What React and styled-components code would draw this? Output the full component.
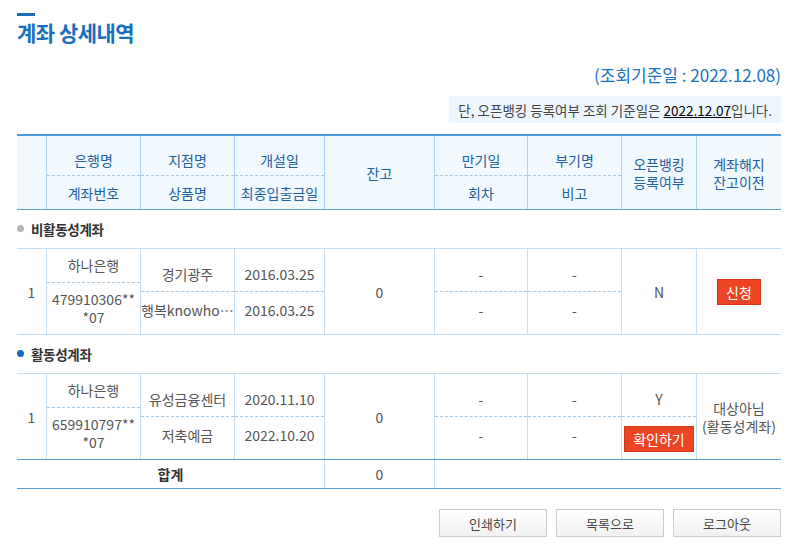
import React from "react";
import styled, { createGlobalStyle } from "styled-components";

const GlobalStyle = createGlobalStyle`
  body {
    margin: 0;
    background: #fff;
    font-family: "Noto Sans CJK KR", "Noto Sans", sans-serif;
    font-size: 14px;
    color: #555;
  }
`;

const COLS = "29px 94px 94px 90px 110px 93px 94px 75px 85px";

const Page = styled.div`
  width: 764px;
  padding: 13px 19px 0 17px;
`;

const TitleBar = styled.div`
  width: 18px;
  height: 3px;
  background: #1a6ebd;
`;

const Title = styled.h1`
  margin: 3px 0 0;
  font-size: 21px;
  line-height: 26px;
  font-weight: 700;
  color: #1a6ebd;
  letter-spacing: -0.5px;
`;

const BaseDate = styled.div`
  margin-top: 19px;
  text-align: right;
  font-size: 17px;
  line-height: 22px;
  color: #1a72c0;
`;

const NoticeRow = styled.div`
  display: flex;
  justify-content: flex-end;
  margin-top: 10px;
`;

const Notice = styled.div`
  height: 27px;
  padding: 0 9px;
  display: flex;
  align-items: center;
  background: #eef6fd;
  color: #444;
  font-size: 13.5px;

  u {
    color: #000;
  }
`;

const Table = styled.div`
  margin-top: 11px;
`;

const Header = styled.div`
  display: grid;
  grid-template-columns: ${COLS};
  grid-template-rows: 73px;
  background: #f1f8fe;
  border-top: 2px solid #4c9ad6;
  border-bottom: 1px solid #5a9fd6;
  color: #22609e;
`;

const Row = styled.div`
  display: grid;
  grid-template-columns: ${COLS};
  border-top: 1px solid #c6def2;
  border-bottom: 1px solid ${(p) => (p.$last ? "#5a9fd6" : "#c6def2")};
`;

const Cell = styled.div`
  display: flex;
  flex-direction: column;
  justify-content: center;
  align-items: stretch;
  text-align: center;
  line-height: 18px;
  min-width: 0;
  border-left: 1px solid ${(p) => (p.$head ? "#a9d2f4" : "#c6def2")};

  &:first-child {
    border-left: none;
  }
`;

const Half = styled.div`
  flex: 1;
  display: flex;
  flex-direction: column;
  justify-content: ${(p) => (p.$top ? "flex-end" : "flex-start")};
  align-items: center;
  padding: ${(p) => (p.$top ? "0 0 8px" : "9px 0 0")};
  min-width: 0;
  overflow: hidden;

  & + & {
    border-top: 1px dashed #a9c9e2;
  }
`;

const HeadHalf = styled.div`
  flex: 1;
  display: flex;
  align-items: ${(p) => (p.$top ? "flex-end" : "center")};
  justify-content: center;
  padding-bottom: ${(p) => (p.$top ? "6px" : "0")};

  & + & {
    border-top: 1px dashed #a9c9e2;
  }
`;

const BankPart = styled.div`
  padding: ${(p) => (p.$first ? "7px 3px 8px" : "7px 3px 8px")};
  word-break: break-all;

  & + & {
    border-top: 1px dashed #a9c9e2;
  }
`;

const Ellipsis = styled.span`
  display: block;
  width: 100%;
  white-space: nowrap;
  overflow: hidden;
  text-overflow: ellipsis;
  text-align: center;
`;

const SectionLabel = styled.div`
  height: 38px;
  display: flex;
  align-items: center;
  gap: 7px;
  font-size: 13.5px;
  font-weight: 700;
  color: #333;
  letter-spacing: -0.3px;
  padding-bottom: 1px;
  box-sizing: border-box;

  &::before {
    content: "";
    width: 7px;
    height: 7px;
    border-radius: 50%;
    background: ${(p) => (p.$active ? "#0f6cbd" : "#b5b5b5")};
  }
`;

const RedButton = styled.button`
  font-family: inherit;
  font-size: 14px;
  line-height: 18px;
  color: #fff;
  background: #ec4524;
  border: 1px solid #d33a1a;
  padding: 3px 8px;
  cursor: pointer;
`;

const TotalRow = styled.div`
  display: grid;
  grid-template-columns: 307px 110px 347px;
  height: 28px;
  border-bottom: 1px solid #5a9fd6;
`;

const TotalCell = styled.div`
  display: flex;
  align-items: center;
  justify-content: center;
  border-left: 1px solid #c6def2;
  font-weight: ${(p) => (p.$bold ? 700 : 400)};
  color: ${(p) => (p.$bold ? "#333" : "#555")};

  &:first-child {
    border-left: none;
  }
`;

const Buttons = styled.div`
  display: flex;
  justify-content: flex-end;
  gap: 9px;
  margin-top: 20px;
`;

const GrayButton = styled.button`
  width: 108px;
  height: 28px;
  font-family: inherit;
  font-size: 13px;
  color: #444;
  background: linear-gradient(#ffffff, #f1f1f1);
  border: 1px solid #cccccc;
  cursor: pointer;
`;

const accounts = [
  {
    label: "비활동성계좌",
    active: false,
    bank: "하나은행",
    number: "479910306***07",
    branch: "경기광주",
    product: "행복knowhow연금예금",
    opened: "2016.03.25",
    lastDate: "2016.03.25",
  },
  {
    label: "활동성계좌",
    active: true,
    bank: "하나은행",
    number: "659910797***07",
    branch: "유성금융센터",
    product: "저축예금",
    opened: "2020.11.10",
    lastDate: "2022.10.20",
  },
];

const HeadRow = () => (
  <Header>
    <Cell $head />
    <Cell $head>
      <HeadHalf $top>은행명</HeadHalf>
      <HeadHalf>계좌번호</HeadHalf>
    </Cell>
    <Cell $head>
      <HeadHalf $top>지점명</HeadHalf>
      <HeadHalf>상품명</HeadHalf>
    </Cell>
    <Cell $head>
      <HeadHalf $top>개설일</HeadHalf>
      <HeadHalf>최종입출금일</HeadHalf>
    </Cell>
    <Cell $head>잔고</Cell>
    <Cell $head>
      <HeadHalf $top>만기일</HeadHalf>
      <HeadHalf>회차</HeadHalf>
    </Cell>
    <Cell $head>
      <HeadHalf $top>부기명</HeadHalf>
      <HeadHalf>비고</HeadHalf>
    </Cell>
    <Cell $head>
      오픈뱅킹
      <br />
      등록여부
    </Cell>
    <Cell $head>
      계좌해지
      <br />
      잔고이전
    </Cell>
  </Header>
);

const AccountRow = ({ account, last }) => (
  <Row $last={last}>
    <Cell>1</Cell>
    <Cell>
      <BankPart $first>{account.bank}</BankPart>
      <BankPart>{account.number}</BankPart>
    </Cell>
    <Cell>
      <Half $top>{account.branch}</Half>
      <Half>
        <Ellipsis>{account.product}</Ellipsis>
      </Half>
    </Cell>
    <Cell>
      <Half $top>{account.opened}</Half>
      <Half>{account.lastDate}</Half>
    </Cell>
    <Cell>0</Cell>
    <Cell>
      <Half $top>-</Half>
      <Half>-</Half>
    </Cell>
    <Cell>
      <Half $top>-</Half>
      <Half>-</Half>
    </Cell>
    {account.active ? (
      <Cell>
        <Half $top>Y</Half>
        <Half>
          <RedButton>확인하기</RedButton>
        </Half>
      </Cell>
    ) : (
      <Cell>N</Cell>
    )}
    {account.active ? (
      <Cell>
        대상아님
        <br />
        (활동성계좌)
      </Cell>
    ) : (
      <Cell>
        <div>
          <RedButton>신청</RedButton>
        </div>
      </Cell>
    )}
  </Row>
);

export default function App() {
  return (
    <Page>
      <GlobalStyle />
      <TitleBar />
      <Title>계좌 상세내역</Title>
      <BaseDate>(조회기준일 : 2022.12.08)</BaseDate>
      <NoticeRow>
        <Notice>
          단, 오픈뱅킹 등록여부 조회 기준일은&nbsp;<u>2022.12.07</u>입니다.
        </Notice>
      </NoticeRow>

      <Table>
        <HeadRow />
        {accounts.map((a, i) => (
          <React.Fragment key={a.number}>
            <SectionLabel $active={a.active}>{a.label}</SectionLabel>
            <AccountRow account={a} last={i === accounts.length - 1} />
          </React.Fragment>
        ))}
        <TotalRow>
          <TotalCell $bold>합계</TotalCell>
          <TotalCell>0</TotalCell>
          <TotalCell />
        </TotalRow>
      </Table>

      <Buttons>
        <GrayButton>인쇄하기</GrayButton>
        <GrayButton>목록으로</GrayButton>
        <GrayButton>로그아웃</GrayButton>
      </Buttons>
    </Page>
  );
}
